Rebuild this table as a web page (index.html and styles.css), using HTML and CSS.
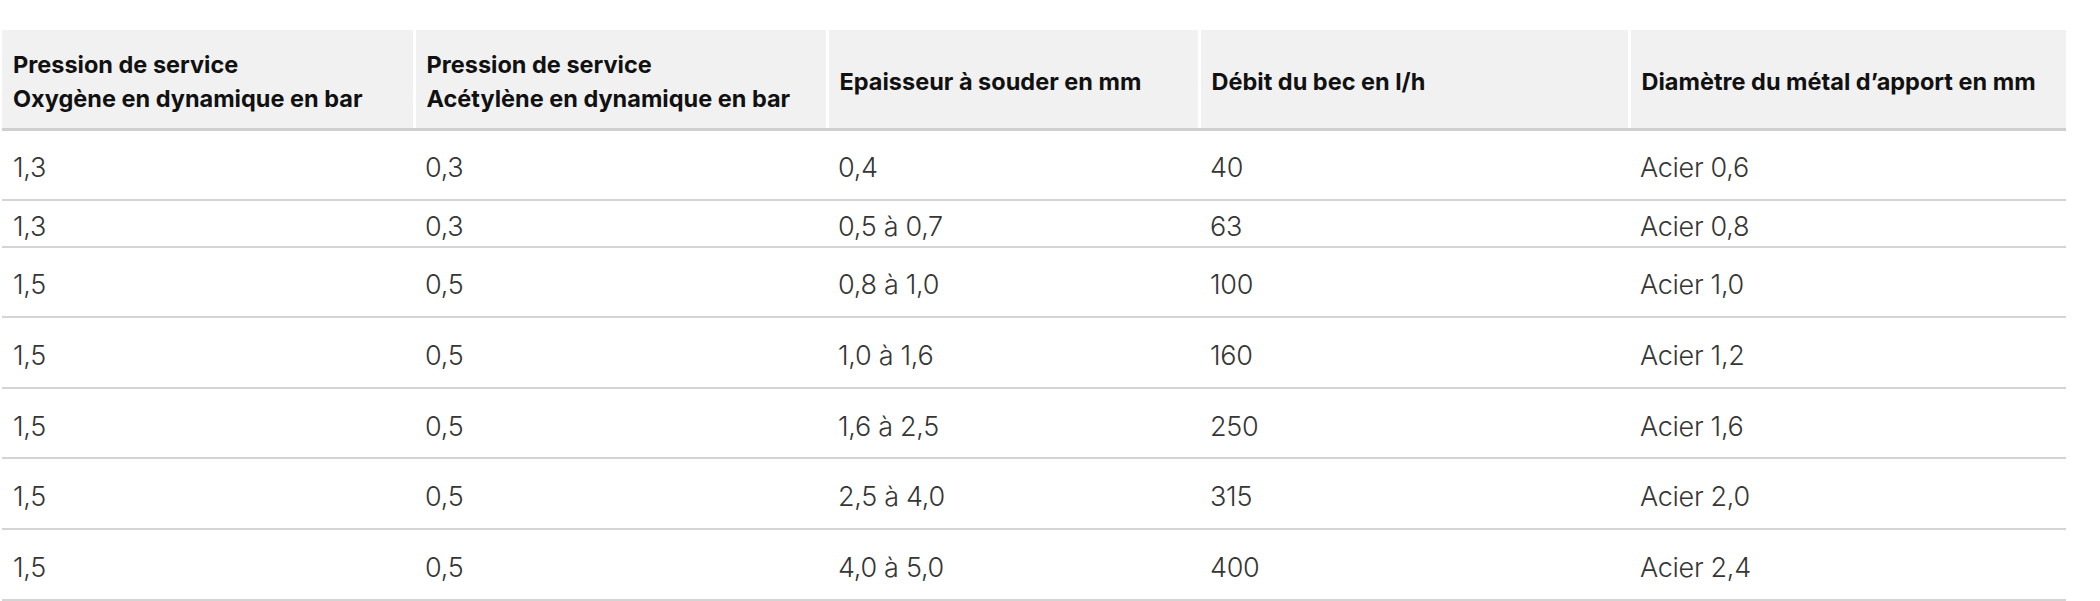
FILE: index.html
```html
<!DOCTYPE html>
<html lang="fr">
<head>
<meta charset="utf-8">
<title>Tableau</title>
<link rel="stylesheet" href="styles.css">
</head>
<body>
<div class="wrap">
<table class="spec">
  <colgroup>
    <col class="c1"><col class="c2"><col class="c3"><col class="c4"><col class="c5">
  </colgroup>
  <thead>
    <tr>
      <th>Pression de service<br>Oxygène en dynamique en bar</th>
      <th>Pression de service<br>Acétylène en dynamique en bar</th>
      <th>Epaisseur à souder en mm</th>
      <th>Débit du bec en l/h</th>
      <th>Diamètre du métal d’apport en mm</th>
    </tr>
  </thead>
  <tbody>
    <tr><td>1,3</td><td>0,3</td><td>0,4</td><td>40</td><td>Acier 0,6</td></tr>
    <tr class="short"><td>1,3</td><td>0,3</td><td>0,5 à 0,7</td><td>63</td><td>Acier 0,8</td></tr>
    <tr><td>1,5</td><td>0,5</td><td>0,8 à 1,0</td><td>100</td><td>Acier 1,0</td></tr>
    <tr><td>1,5</td><td>0,5</td><td>1,0 à 1,6</td><td>160</td><td>Acier 1,2</td></tr>
    <tr><td>1,5</td><td>0,5</td><td>1,6 à 2,5</td><td>250</td><td>Acier 1,6</td></tr>
    <tr><td>1,5</td><td>0,5</td><td>2,5 à 4,0</td><td>315</td><td>Acier 2,0</td></tr>
    <tr><td>1,5</td><td>0,5</td><td>4,0 à 5,0</td><td>400</td><td>Acier 2,4</td></tr>
  </tbody>
</table>
</div>
</body>
</html>
```
FILE: styles.css
```css
html, body {
  margin: 0;
  padding: 0;
  background: #ffffff;
}
.wrap {
  padding: 30px 0 0 2px;
}
.spec {
  border-collapse: collapse;
  table-layout: fixed;
  width: 2064px;
  font-family: "Inter", "Liberation Sans", sans-serif;
}
.c1 { width: 412px; }
.c2 { width: 413px; }
.c3 { width: 372px; }
.c4 { width: 430px; }
.c5 { width: 437px; }
.spec th {
  background: #f1f1f1;
  color: #111111;
  font-weight: 700;
  font-size: 23.5px;
  line-height: 34px;
  letter-spacing: 0;
  text-align: left;
  vertical-align: middle;
  height: 99px;
  padding: 7px 11px 0;
  box-sizing: border-box;
  border-right: 3px solid #ffffff;
  border-bottom: 3px solid #cfcfcf;
}
.spec th:last-child {
  border-right: 0;
}
.spec td {
  color: #363636;
  font-weight: 300;
  font-size: 27px;
  line-height: 32px;
  letter-spacing: -0.3px;
  height: 70.6px;
  padding: 7px 11px 0;
  box-sizing: border-box;
  vertical-align: middle;
  border-bottom: 2px solid #d4d4d4;
}
.spec tr.short td {
  height: 47px;
}
```
